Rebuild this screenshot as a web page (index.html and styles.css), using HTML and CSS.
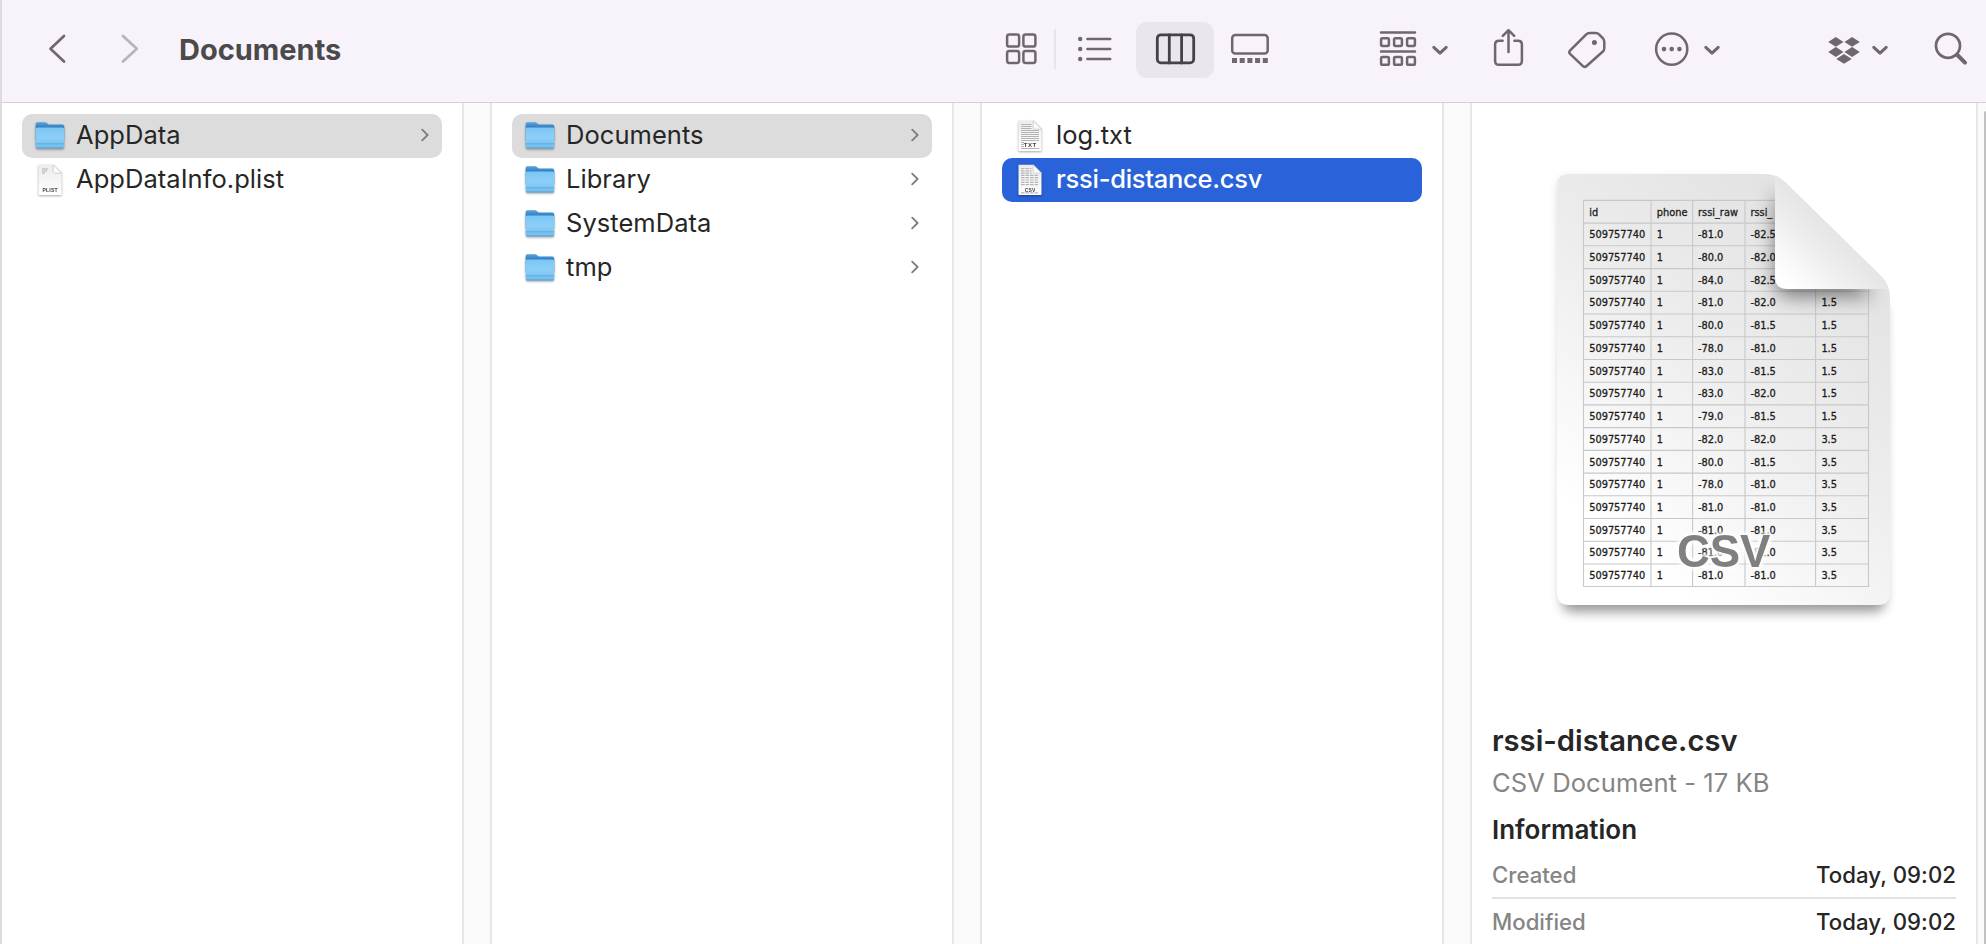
FILE: index.html
```html
<!DOCTYPE html>
<html lang="en">
<head>
<meta charset="utf-8">
<title>Documents</title>
<link rel="stylesheet" href="styles.css">
</head>
<body>
<svg class="defs" width="0" height="0" aria-hidden="true">
  <defs>
    <linearGradient id="folder-back" x1="0" y1="0" x2="0" y2="1"><stop offset="0" stop-color="#5aa6dc"/><stop offset=".3" stop-color="#2f7cc4"/></linearGradient>
    <linearGradient id="folder-front" x1="0" y1="0" x2="0" y2="1"><stop offset="0" stop-color="#7cc6f5"/><stop offset=".5" stop-color="#8bcff8"/><stop offset="1" stop-color="#72bdec"/></linearGradient>
    <linearGradient id="page" x1="0" y1="0" x2="0" y2="1"><stop offset="0" stop-color="#ececec"/><stop offset="1" stop-color="#ffffff"/></linearGradient>
    <symbol id="folder" viewBox="0 0 30 32">
      <path d="M.7 4.2Q.7 2.2 2.5 2.2H10Q11 2.2 12 3.2L13.6 4.6H27.2Q29.2 4.6 29.2 6.6V20H.7Z" fill="url(#folder-back)"/>
      <rect x=".7" y="7.6" width="28.5" height="20.6" rx="1.5" fill="url(#folder-front)"/>
      <path d="M1 23.8H29" stroke="#5aa8dc" stroke-width=".9"/>
      <path d="M1.5 28H28.5" stroke="#5a9fd0" stroke-width="1"/>
    </symbol>
    <symbol id="sheet" viewBox="0 0 30 32">
      <path d="M4 .8H18.5L26.5 9V30.2Q26.5 31 25.7 31H4.3Q3.5 31 3.5 30.2V1.6Q3.5 .8 4 .8Z" fill="url(#page)"/>
      <path d="M18.2 .8V8Q18.2 9.2 19.4 9.2H26.7Z" fill="#fcfcfc" stroke="#c4c4c4" stroke-width=".7"/>
    </symbol>
    <symbol id="arrow" viewBox="0 0 8 14"><path d="M1.2 1.6 6.6 7 1.2 12.4" fill="none" stroke="#7d7d7d" stroke-width="1.8" stroke-linecap="round" stroke-linejoin="round"/></symbol>
  </defs>
</svg>

<div class="window">
  <header class="toolbar">
    <svg class="tool back" width="20" height="40" viewBox="48 29 20 40"><path class="line" d="M64 36 50.5 48.8 64 61.6"/></svg>
    <svg class="tool forward" width="20" height="40" viewBox="120 29 20 40"><path class="line" d="M123 36 136.8 48.8 123 61.6"/></svg>
    <h1 class="title">Documents</h1>
    <svg class="tool grid-view" width="34" height="40" viewBox="1004 29 34 40"><g class="line"><rect x="1007.1" y="34.6" width="12" height="12" rx="2.2"/><rect x="1023.4" y="34.6" width="12" height="12" rx="2.2"/><rect x="1007.1" y="50.9" width="12" height="12" rx="2.2"/><rect x="1023.4" y="50.9" width="12" height="12" rx="2.2"/></g></svg>
    <span class="separator"></span>
    <svg class="tool list-view" width="38" height="40" viewBox="1076 29 38 40"><path class="line" d="M1087.4 39H1110.2M1087.4 49H1110.2M1087.4 59H1110.2"/><g class="solid"><circle cx="1080.2" cy="39" r="2.2"/><circle cx="1080.2" cy="49" r="2.2"/><circle cx="1080.2" cy="59" r="2.2"/></g></svg>
    <span class="view-selected"><svg class="tool" width="42" height="40" viewBox="1154 29 42 40"><g class="line"><rect x="1157.3" y="34.8" width="36.4" height="28" rx="3.6"/><path d="M1169.3 35V63M1181.6 35V63"/></g></svg></span>
    <svg class="tool gallery-view" width="42" height="40" viewBox="1229 29 42 40"><rect class="line" x="1232.2" y="35" width="35.5" height="18.6" rx="3.2"/><path class="solid" d="M1232 58h5v5h-5zM1239.7 58h5v5h-5zM1247.4 58h5v5h-5zM1255.1 58h5v5h-5zM1262.8 58h5v5h-5z"/></svg>
    <svg class="tool group-by" width="72" height="40" viewBox="1378 29 72 40"><path class="line" d="M1381 32.6H1415M1381 51.4H1415"/><g class="line"><rect x="1381.1" y="38.2" width="7.8" height="7.8" rx="1.4"/><rect x="1394.1" y="38.2" width="7.8" height="7.8" rx="1.4"/><rect x="1407.1" y="38.2" width="7.8" height="7.8" rx="1.4"/><rect x="1381.1" y="57" width="7.8" height="7.8" rx="1.4"/><rect x="1394.1" y="57" width="7.8" height="7.8" rx="1.4"/><rect x="1407.1" y="57" width="7.8" height="7.8" rx="1.4"/></g><path class="line caret" d="M1433.8 47.3 1440 53.2 1446.2 47.3"/></svg>
    <svg class="tool share" width="34" height="40" viewBox="1492 29 34 40"><path class="line" d="M1502.6 40.8H1499Q1495.1 40.8 1495.1 44.6V61Q1495.1 64.8 1499 64.8H1518Q1521.9 64.8 1521.9 61V44.6Q1521.9 40.8 1518 40.8H1514.4M1508.5 52V30.6M1502.8 35.8 1508.5 30.2 1514.2 35.8"/></svg>
    <svg class="tool tag" width="42" height="40" viewBox="1566 29 42 40"><path class="line" d="M1570.2 50.4 1586 34.6Q1587.6 33 1589.8 33H1595.6Q1597.8 33 1599.3 34.6L1602.8 38.2Q1604.3 39.8 1604.3 42V48.2Q1604.3 50.2 1602.6 51.8L1586.6 66Q1584.6 67.8 1582.7 65.9L1570.3 54.2Q1568.4 52.3 1570.2 50.4Z"/><circle class="solid" cx="1594.4" cy="42.5" r="2.5"/></svg>
    <svg class="tool more" width="68" height="40" viewBox="1653 29 68 40"><circle class="line" cx="1671.7" cy="49.1" r="15.6"/><g class="solid"><circle cx="1664" cy="49.1" r="2.3"/><circle cx="1671.7" cy="49.1" r="2.3"/><circle cx="1679.4" cy="49.1" r="2.3"/></g><path class="line caret" d="M1705.8 47.3 1712 53.2 1718.2 47.3"/></svg>
    <svg class="tool dropbox" width="62" height="40" viewBox="1826 29 62 40"><path class="solid" d="M1828.2 41.9 1835.8 37 1843.5 41.9 1835.8 46.8ZM1844.4 41.9 1852.1 37 1859.8 41.9 1852.1 46.8ZM1828.2 52 1835.8 47.1 1843.5 52 1835.8 56.9ZM1844.4 52 1852.1 47.1 1859.8 52 1852.1 56.9ZM1836.3 58.9 1844 54 1851.7 58.9 1844 63.8Z"/><path class="line caret" d="M1873.8 47.3 1880 53.2 1886.2 47.3"/></svg>
    <svg class="tool search" width="34" height="40" viewBox="1934 29 34 40"><circle class="line" cx="1948" cy="45.8" r="12"/><path class="line handle" d="M1957.4 55 1965 62.6"/></svg>
  </header>

  <main class="columns">
    <ul class="column">
      <li class="row open"><svg class="icon"><use href="#folder"/></svg><span class="name">AppData</span><svg class="arrow"><use href="#arrow"/></svg></li>
      <li class="row"><svg class="icon"><use href="#sheet"/><path d="M7 5H13M7 7H12M7 9H10" stroke="#b0b0b0"/><text class="badge" x="15" y="27.6" textLength="15">PLIST</text></svg><span class="name">AppDataInfo.plist</span></li>
    </ul>
    <div class="gutter"></div>
    <ul class="column">
      <li class="row open"><svg class="icon"><use href="#folder"/></svg><span class="name">Documents</span><svg class="arrow"><use href="#arrow"/></svg></li>
      <li class="row"><svg class="icon"><use href="#folder"/></svg><span class="name">Library</span><svg class="arrow"><use href="#arrow"/></svg></li>
      <li class="row"><svg class="icon"><use href="#folder"/></svg><span class="name">SystemData</span><svg class="arrow"><use href="#arrow"/></svg></li>
      <li class="row"><svg class="icon"><use href="#folder"/></svg><span class="name">tmp</span><svg class="arrow"><use href="#arrow"/></svg></li>
    </ul>
    <div class="gutter"></div>
    <ul class="column">
      <li class="row"><svg class="icon"><use href="#sheet"/><path d="M6 4.5H16.5M6 6.5H16.5M6 8.5H16.5M6 10.5H24M6 12.5H24M6 14.5H24M6 16.5H24M6 18.5H24M6 20.5H24M6 22.5H9M6 24.5H9M6 26.5H9M6 28.5H24" stroke="#b4b4b4" stroke-width="1.2"/><text class="badge big" x="15" y="27.4" textLength="12.5">TXT</text></svg><span class="name">log.txt</span></li>
      <li class="row selected"><svg class="icon"><use href="#sheet"/><path d="M6 4.5H16.5M6 6.8H16.5M6 9.1H16.5M6 11.4H24M6 13.7H24M6 16H24M6 18.3H24M6 20.6H24M6 28.8H24" stroke="#b5b5b5" stroke-width="1.2" stroke-dasharray="3.6 .9"/><text class="badge" x="15" y="27.6" textLength="10.5">CSV</text></svg><span class="name">rssi-distance.csv</span></li>
    </ul>
    <div class="gutter"></div>

    <section class="preview">
      <svg class="thumbnail" width="370" height="480" viewBox="0 0 370 480">
        <defs>
          <linearGradient id="paper" x1=".75" y1=".1" x2=".25" y2=".9"><stop offset="0" stop-color="#e3e3e3"/><stop offset=".45" stop-color="#ededed"/><stop offset="1" stop-color="#ffffff"/></linearGradient>
          <linearGradient id="curl" gradientUnits="userSpaceOnUse" x1="296" y1="66" x2="242" y2="122"><stop offset="0" stop-color="#e4e4e4"/><stop offset=".35" stop-color="#ececec"/><stop offset=".75" stop-color="#f9f9f9"/><stop offset="1" stop-color="#ffffff"/></linearGradient>
          <clipPath id="sheet-clip"><path d="M29 14H224Q237 14 245 22L342 117Q350 125 350 138V433Q350 445 338 445H29Q17 445 17 433V26Q17 14 29 14Z"/></clipPath>
          <clipPath id="cells-clip"><path d="M17 14H235V129H350V445H17Z"/></clipPath>
          <filter id="soft" x="-20%" y="-20%" width="140%" height="140%"><feGaussianBlur stdDeviation="6"/></filter>
          <filter id="soft-wide" x="-50%" y="-50%" width="200%" height="200%"><feGaussianBlur stdDeviation="10"/></filter>
        </defs>
        <path d="M29 22H215L345 150V440Q345 452 333 452H34Q22 452 22 440V22Z" fill="#000" opacity=".4" filter="url(#soft)"/>
        <path d="M29 14H224Q237 14 245 22L342 117Q350 125 350 138V433Q350 445 338 445H29Q17 445 17 433V26Q17 14 29 14Z" fill="url(#paper)"/>
        <g clip-path="url(#cells-clip)">
        <path class="cell-lines" d="M43.5 40.4H328.5M43.5 63.1H328.5M43.5 85.8H328.5M43.5 108.6H328.5M43.5 131.3H328.5M43.5 154H328.5M43.5 176.7H328.5M43.5 199.5H328.5M43.5 222.2H328.5M43.5 244.9H328.5M43.5 267.6H328.5M43.5 290.4H328.5M43.5 313.1H328.5M43.5 335.8H328.5M43.5 358.5H328.5M43.5 381.3H328.5M43.5 404H328.5M43.5 426.5H328.5M43.5 40V427M111 40V427M152.6 40V427M205 40V427M275.6 40V427M328.5 40V427"/>
        <g class="cells">
          <text y="55.5"><tspan x="49.2">id</tspan><tspan x="116.8">phone</tspan><tspan x="158">rssi_raw</tspan><tspan x="210.4">rssi_</tspan></text>
          <text y="78.2"><tspan x="49.2">509757740</tspan><tspan x="116.8">1</tspan><tspan x="158">-81.0</tspan><tspan x="210.4">-82.5</tspan></text>
          <text y="100.9"><tspan x="49.2">509757740</tspan><tspan x="116.8">1</tspan><tspan x="158">-80.0</tspan><tspan x="210.4">-82.0</tspan></text>
          <text y="123.7"><tspan x="49.2">509757740</tspan><tspan x="116.8">1</tspan><tspan x="158">-84.0</tspan><tspan x="210.4">-82.5</tspan></text>
          <text y="146.4"><tspan x="49.2">509757740</tspan><tspan x="116.8">1</tspan><tspan x="158">-81.0</tspan><tspan x="210.4">-82.0</tspan><tspan x="281.4">1.5</tspan></text>
          <text y="169.1"><tspan x="49.2">509757740</tspan><tspan x="116.8">1</tspan><tspan x="158">-80.0</tspan><tspan x="210.4">-81.5</tspan><tspan x="281.4">1.5</tspan></text>
          <text y="191.8"><tspan x="49.2">509757740</tspan><tspan x="116.8">1</tspan><tspan x="158">-78.0</tspan><tspan x="210.4">-81.0</tspan><tspan x="281.4">1.5</tspan></text>
          <text y="214.6"><tspan x="49.2">509757740</tspan><tspan x="116.8">1</tspan><tspan x="158">-83.0</tspan><tspan x="210.4">-81.5</tspan><tspan x="281.4">1.5</tspan></text>
          <text y="237.3"><tspan x="49.2">509757740</tspan><tspan x="116.8">1</tspan><tspan x="158">-83.0</tspan><tspan x="210.4">-82.0</tspan><tspan x="281.4">1.5</tspan></text>
          <text y="260"><tspan x="49.2">509757740</tspan><tspan x="116.8">1</tspan><tspan x="158">-79.0</tspan><tspan x="210.4">-81.5</tspan><tspan x="281.4">1.5</tspan></text>
          <text y="282.7"><tspan x="49.2">509757740</tspan><tspan x="116.8">1</tspan><tspan x="158">-82.0</tspan><tspan x="210.4">-82.0</tspan><tspan x="281.4">3.5</tspan></text>
          <text y="305.5"><tspan x="49.2">509757740</tspan><tspan x="116.8">1</tspan><tspan x="158">-80.0</tspan><tspan x="210.4">-81.5</tspan><tspan x="281.4">3.5</tspan></text>
          <text y="328.2"><tspan x="49.2">509757740</tspan><tspan x="116.8">1</tspan><tspan x="158">-78.0</tspan><tspan x="210.4">-81.0</tspan><tspan x="281.4">3.5</tspan></text>
          <text y="350.9"><tspan x="49.2">509757740</tspan><tspan x="116.8">1</tspan><tspan x="158">-81.0</tspan><tspan x="210.4">-81.0</tspan><tspan x="281.4">3.5</tspan></text>
          <text y="373.6"><tspan x="49.2">509757740</tspan><tspan x="116.8">1</tspan><tspan x="158">-81.0</tspan><tspan x="210.4">-81.0</tspan><tspan x="281.4">3.5</tspan></text>
          <text y="396.4"><tspan x="49.2">509757740</tspan><tspan x="116.8">1</tspan><tspan x="158">-81.0</tspan><tspan x="210.4">-81.0</tspan><tspan x="281.4">3.5</tspan></text>
          <text y="419.1"><tspan x="49.2">509757740</tspan><tspan x="116.8">1</tspan><tspan x="158">-81.0</tspan><tspan x="210.4">-81.0</tspan><tspan x="281.4">3.5</tspan></text>
        </g>
        </g>
        <g clip-path="url(#sheet-clip)">
          <path d="M236 32V122Q236 136 250 136H334Z" fill="#000" opacity=".5" filter="url(#soft-wide)"/>
        </g>
        <path d="M235 15.6Q241 18 245 22L341 116Q347 122 348 129H247Q235 129 235 117Z" fill="url(#curl)"/>
        <text class="kind" x="183.7" y="406.6">CSV</text>
      </svg>
      <div class="details">
        <h2 class="file-name">rssi-distance.csv</h2>
        <p class="file-kind">CSV Document - 17 KB</p>
        <h3 class="info-title">Information</h3>
        <dl class="info">
          <div class="info-row"><dt>Created</dt><dd>Today, 09:02</dd></div>
          <div class="info-row"><dt>Modified</dt><dd>Today, 09:02</dd></div>
        </dl>
      </div>
    </section>
    <div class="scroll-track"><div class="scroll-thumb"></div></div>
  </main>
</div>
</body>
</html>
```
FILE: styles.css
```css
* { box-sizing: border-box; margin: 0; padding: 0; }
body { font-family: Inter, "Liberation Sans", sans-serif; color: #262626; background: #fff; overflow: hidden; }
.defs { position: absolute; }
.window { width: 1986px; height: 944px; border-left: 2px solid #dfd9e0; display: flex; flex-direction: column; overflow: hidden; }

.toolbar { flex: none; height: 103px; padding-bottom: 4px; display: flex; align-items: center; background: #f8f3fa; border-bottom: 1px solid #d3d1d4; }
.tool { flex: none; display: block; color: #6e6770; }
.line { fill: none; stroke: currentColor; stroke-width: 2.5; stroke-linecap: round; stroke-linejoin: round; }
.solid { fill: currentColor; }
.caret { stroke-width: 3; }
.back { margin-left: 46px; }
.back .line, .forward .line { stroke-width: 2.7; }
.forward { margin-left: 52px; color: #b9b4bb; }
.title { flex: none; width: 825px; margin-left: 39px; padding-top: 1px; font-size: 29px; line-height: 40px; font-weight: 700; color: #4b4a4b; white-space: nowrap; }
.separator { flex: none; width: 2px; height: 40px; margin-left: 16px; background: #e9e4eb; }
.list-view { margin-left: 20px; }
.view-selected { flex: none; width: 78px; height: 56px; margin: 2px 0 0 22px; padding-bottom: 2px; border-radius: 11px; background: #ebe6ed; display: flex; align-items: center; justify-content: center; }
.view-selected .tool { color: #464347; }
.view-selected .line { stroke-width: 2.8; }
.gallery-view { margin-left: 15px; }
.group-by { margin-left: 107px; }
.share { margin-left: 42px; }
.tag { margin-left: 40px; }
.more { margin-left: 45px; }
.dropbox { margin-left: 105px; }
.search { margin-left: 46px; }
.search .line { stroke-width: 2.7; }
.search .handle { stroke-width: 4; }

.columns { flex: 1; display: flex; min-height: 0; }
.column { flex: none; width: 460px; padding: 11px 20px 0; list-style: none; }
.gutter { flex: none; width: 30px; background: #fafafa; border: 2px solid #e6e6e6; border-width: 0 2px; }
.row { height: 44px; padding: 0 13px; border-radius: 10px; display: flex; align-items: center; }
.row.open { background: #dcdcdc; }
.row.selected { background: #2962d9; color: #fff; }
.row.selected .name { font-weight: 500; letter-spacing: -.27px; }
.icon { flex: none; width: 30px; height: 32px; margin-right: 11px; overflow: visible; filter: drop-shadow(0 1px 1px rgba(0, 0, 0, .35)); }
.badge { font: 700 5px "Liberation Sans", sans-serif; fill: #444; text-anchor: middle; }
.badge.big { font-size: 6px; }
.name { flex: 1; padding-bottom: 2px; font-size: 25.5px; line-height: 42px; letter-spacing: .05px; white-space: nowrap; }
.arrow { flex: none; width: 8px; height: 14px; margin-bottom: 2px; }

.preview { flex: none; width: 504px; padding: 57px 20px 0; display: flex; flex-direction: column; }
.thumbnail { flex: none; display: block; margin-left: 48px; }
.cell-lines { fill: none; stroke: #c8c8c8; stroke-width: 1.1; }
.cells { font: 9.8px "DejaVu Sans", sans-serif; fill: #1c1c1c; stroke: #1c1c1c; stroke-width: .3; }
.kind { font: 700 45.5px "Liberation Sans", sans-serif; fill: #808080; text-anchor: middle; filter: drop-shadow(0 0 2px #fff) drop-shadow(0 0 2px #fff) drop-shadow(0 0 1px #fff); }
.details { white-space: nowrap; padding-top: 79px; }
.file-name { font-size: 29.2px; line-height: 44px; font-weight: 600; }
.file-kind { font-size: 25.6px; line-height: 39px; letter-spacing: .05px; color: #858585; }
.info-title { margin-top: 8px; margin-bottom: 2px; font-size: 26px; line-height: 40px; font-weight: 600; }
.info-row { display: flex; justify-content: space-between; height: 47px; font-size: 22.2px; line-height: 45px; font-weight: 500; }
.info-row:first-child { border-bottom: 2px solid #e3e3e3; }
dt { color: #858585; }
dd { letter-spacing: .05px; }
.scroll-track { flex: none; width: 10px; padding-top: 8px; border-left: 2px solid #e6e6e6; background: #fafafa; display: flex; justify-content: flex-end; }
.scroll-thumb { width: 2px; border-radius: 2px 0 0 0; background: #c1c1c1; }
```
